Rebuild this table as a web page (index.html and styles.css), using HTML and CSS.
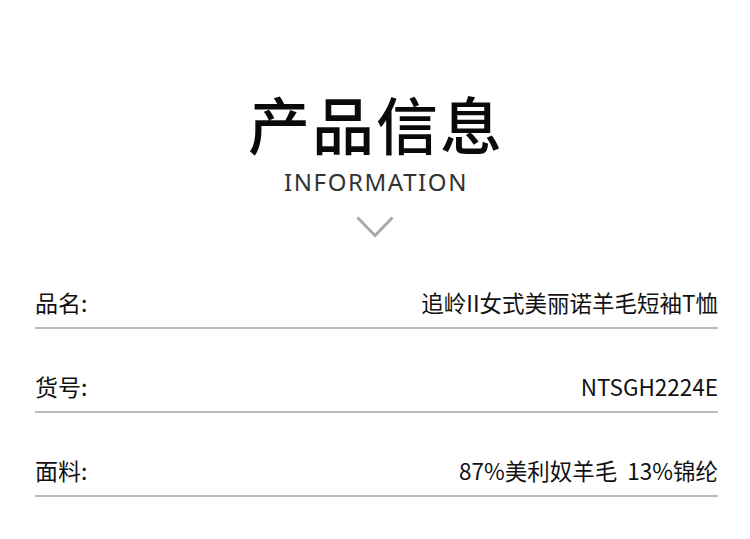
FILE: index.html
```html
<!DOCTYPE html>
<html lang="zh">
<head>
<meta charset="utf-8">
<link rel="stylesheet" href="styles.css">
</head>
<body>
<div class="page">
  <header class="head">
    <h1 class="title">产品信息</h1>
    <div class="sub">INFORMATION</div>
    <svg class="chev" width="38" height="22" viewBox="0 0 38 22"><polyline points="1.5,1.5 19,19.5 36.5,1.5" fill="none" stroke="#aaaaaa" stroke-width="3"/></svg>
  </header>
  <div class="rows">
    <div class="row"><span class="label">品名:</span><span class="value">追岭II女式美丽诺羊毛短袖T恤</span></div>
    <div class="row"><span class="label">货号:</span><span class="value">NTSGH2224E</span></div>
    <div class="row"><span class="label">面料:</span><span class="value">87%美利奴羊毛&nbsp;&nbsp;13%锦纶</span></div>
  </div>
</div>
</body>
</html>
```
FILE: styles.css
```css
html, body { margin: 0; padding: 0; background: #fff; }
body { font-family: "Noto Sans CJK SC", "Noto Sans", sans-serif; color: #111; }
.page { width: 750px; height: 539px; overflow: hidden; }
.head { display: flex; flex-direction: column; align-items: center; padding-top: 80px; }
.title { margin: 0; font-size: 62px; font-weight: 500; line-height: 86px; letter-spacing: 2px; padding-left: 2px; color: #0a0a0a; }
.sub { margin-top: 1px; font-family: "Noto Sans", sans-serif; font-size: 24px; line-height: 30px; letter-spacing: 1.6px; padding-left: 2px; color: #333; }
.chev { display: block; margin-top: 19px; }
.rows { padding: 25px 32px 0 35px; }
.row { display: flex; justify-content: space-between; align-items: flex-end; height: 84px; padding-bottom: 10px; box-sizing: border-box; border-bottom: 2px solid #bcbcbc; }
.row:first-child { height: 66px; }
.label, .value { font-size: 22.5px; line-height: 30px; }
.label { font-size: 23px; }
```
